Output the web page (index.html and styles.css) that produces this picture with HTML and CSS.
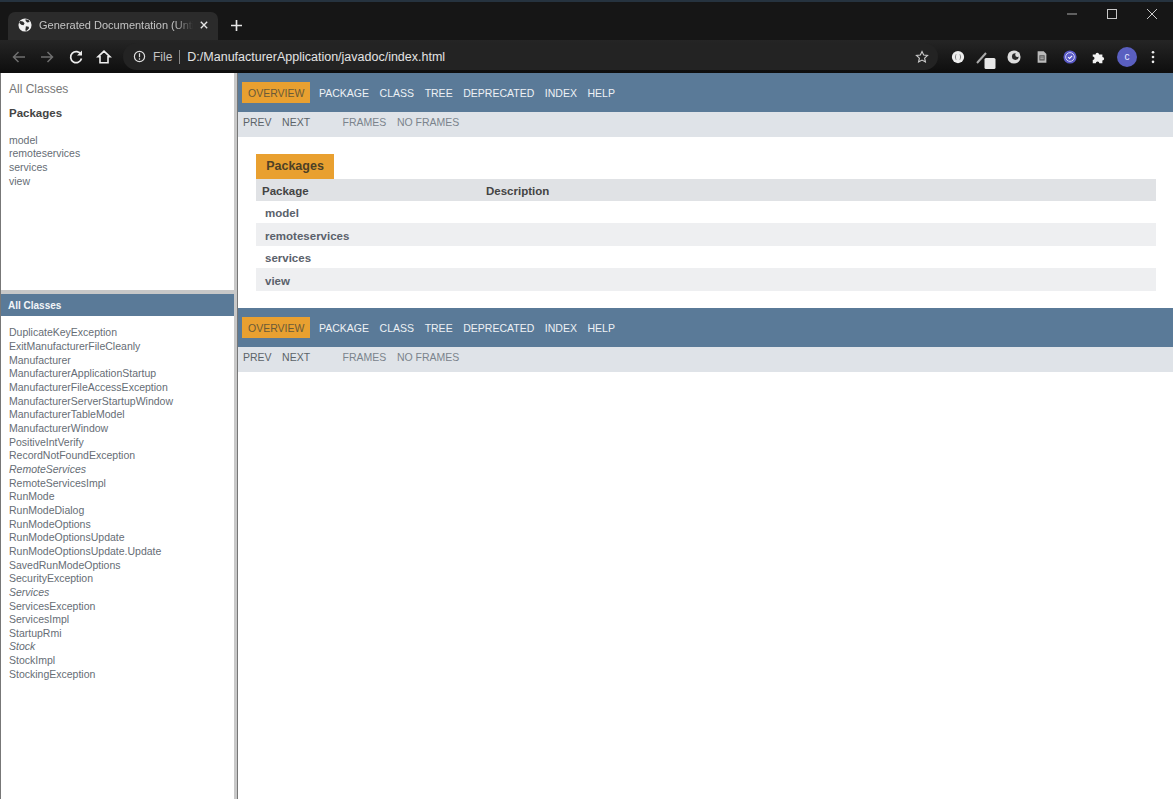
FILE: index.html
```html
<!DOCTYPE html>
<html lang="en">
<head>
<meta charset="utf-8">
<title>Generated Documentation</title>
<link rel="stylesheet" href="styles.css">
</head>
<body>
<div class="browser">
  <header class="chrome">
    <div class="tabstrip">
      <div class="tab">
        <svg class="globe" viewBox="0 0 16 16"><circle cx="8" cy="8" r="7.500" fill="#f0f0f0"/><path d="M2.500 3.500l3.200.4 1.800 2.100-1.200 2.300-2.600-.6-2.400-2.400zM9 9.500l3.200.5.400 1.700-2.600 3-1.600-.5zM8.500 1.500l3.600.8 1.200 2.200-2.800.6-1.700-1.600z" fill="#2b2b2b"/></svg>
        <span class="tab-title">Generated Documentation (Untit</span>
        <svg class="tab-x" viewBox="0 0 10 10"><path d="M1 1l8 8M9 1l-8 8" stroke="#e6e6e6" stroke-width="1.700"/></svg>
      </div>
      <svg class="newtab" viewBox="0 0 12 12"><path d="M6 0v12M0 6h12" stroke="#e6e6e6" stroke-width="1.800"/></svg>
      <div class="window-controls">
        <svg viewBox="0 0 12 12"><path d="M1 6h10" stroke="#aaa" stroke-width="1"/></svg>
        <svg viewBox="0 0 12 12"><rect x="1.500" y="1.500" width="9" height="9" fill="none" stroke="#c8c8c8" stroke-width="1"/></svg>
        <svg viewBox="0 0 12 12"><path d="M1 1l10 10M11 1L1 11" stroke="#c8c8c8" stroke-width="1"/></svg>
      </div>
    </div>
    <div class="toolbar">
      <svg class="tool" viewBox="0 0 16 16"><path d="M14 8H2.500M7.500 3l-5 5 5 5" fill="none" stroke="#6f6f6f" stroke-width="1.500"/></svg>
      <svg class="tool" viewBox="0 0 16 16"><path d="M2 8h11.500M8.500 3l5 5-5 5" fill="none" stroke="#6f6f6f" stroke-width="1.500"/></svg>
      <svg class="tool" viewBox="0 0 16 16"><path d="M13 5.500A5.500 5.500 0 1 0 13.500 9.500" fill="none" stroke="#eee" stroke-width="1.700"/><path d="M14 1.500v5h-5z" fill="#eee"/></svg>
      <svg class="tool" viewBox="0 0 16 16"><path d="M8 2.200L2 7.800h2v6h8v-6h2z" fill="none" stroke="#eee" stroke-width="1.600"/></svg>
      <div class="omnibox">
        <svg class="info" viewBox="0 0 14 14"><circle cx="7" cy="7" r="5.500" fill="none" stroke="#ddd" stroke-width="1.300"/><path d="M7 3.500v4.200M7 9v1.500" stroke="#ddd" stroke-width="1.300"/></svg>
        <span class="scheme">File</span>
        <span class="sep"></span>
        <span class="url">D:/ManufacturerApplication/javadoc/index.html</span>
        <svg class="star" viewBox="0 0 16 16"><path d="M8 1.800l1.900 4 4.400.5-3.300 3 .9 4.400L8 11.500l-3.900 2.200.9-4.400-3.300-3 4.400-.5z" fill="none" stroke="#ccc" stroke-width="1.300"/></svg>
      </div>
      <div class="extensions">
        <svg class="ext" viewBox="0 0 16 16"><circle cx="8" cy="8" r="7" fill="#eee"/><path d="M5.800 5C4.800 7 4.800 9 5.800 11M10.200 5c1 2 1 4 0 6" fill="none" stroke="#777" stroke-width="1"/></svg>
        <svg class="ext wide" viewBox="0 0 22 22"><path d="M2 15L11 5" stroke="#aaa" stroke-width="2"/><rect x="9.500" y="10" width="11" height="11" rx="1.500" fill="#e8e8e8"/></svg>
        <svg class="ext" viewBox="0 0 16 16"><circle cx="8" cy="8" r="7.500" fill="#ddd"/><circle cx="9.500" cy="7.500" r="3.800" fill="#2a2a2a"/><circle cx="12" cy="5.500" r="2.600" fill="#ddd"/></svg>
        <svg class="ext" viewBox="0 0 16 16"><path d="M3 1.500h7l3 3v10H3z" fill="#bbb"/><rect x="5" y="6" width="6" height="6" fill="#555"/><path d="M6 8h4M6 10h4" stroke="#ccc"/></svg>
        <svg class="ext" viewBox="0 0 16 16"><circle cx="8" cy="8" r="7.500" fill="#5a5ac8"/><circle cx="8" cy="8" r="5" fill="none" stroke="#dfe0f5"/><path d="M5.800 8l1.600 1.600 3-3" fill="none" stroke="#fff" stroke-width="1.200"/></svg>
        <svg class="ext puzzle" viewBox="0 0 16 16"><path d="M2 5h3.200a2 2 0 1 1 4 0H13v3a2 2 0 1 1 0 4v3H9.500a2 2 0 1 0-4 0H2v-3.500a2 2 0 1 0 0-4z" fill="#f2f2f2"/></svg>
        <span class="avatar">c</span>
        <svg class="menu" viewBox="0 0 4 16"><circle cx="2" cy="2.500" r="1.500" fill="#eee"/><circle cx="2" cy="8" r="1.500" fill="#eee"/><circle cx="2" cy="13.500" r="1.500" fill="#eee"/></svg>
      </div>
    </div>
  </header>

  <div class="frames">
    <aside class="sidebar">
      <section class="pkg-frame">
        <h1 class="all-classes">All Classes</h1>
        <h2 class="packages-title">Packages</h2>
        <ul class="side-list pkg-list">
          <li>model</li>
          <li>remoteservices</li>
          <li>services</li>
          <li>view</li>
        </ul>
      </section>
      <section class="class-frame">
        <div class="class-bar">All Classes</div>
        <ul class="side-list class-list">
          <li>DuplicateKeyException</li>
          <li>ExitManufacturerFileCleanly</li>
          <li>Manufacturer</li>
          <li>ManufacturerApplicationStartup</li>
          <li>ManufacturerFileAccessException</li>
          <li>ManufacturerServerStartupWindow</li>
          <li>ManufacturerTableModel</li>
          <li>ManufacturerWindow</li>
          <li>PositiveIntVerify</li>
          <li>RecordNotFoundException</li>
          <li class="iface">RemoteServices</li>
          <li>RemoteServicesImpl</li>
          <li>RunMode</li>
          <li>RunModeDialog</li>
          <li>RunModeOptions</li>
          <li>RunModeOptionsUpdate</li>
          <li>RunModeOptionsUpdate.Update</li>
          <li>SavedRunModeOptions</li>
          <li>SecurityException</li>
          <li class="iface">Services</li>
          <li>ServicesException</li>
          <li>ServicesImpl</li>
          <li>StartupRmi</li>
          <li class="iface">Stock</li>
          <li>StockImpl</li>
          <li>StockingException</li>
        </ul>
      </section>
    </aside>

    <main class="content">
      <nav class="topnav">
        <span class="nav-item active">OVERVIEW</span>
        <span class="nav-item">PACKAGE</span>
        <span class="nav-item">CLASS</span>
        <span class="nav-item">TREE</span>
        <span class="nav-item">DEPRECATED</span>
        <span class="nav-item">INDEX</span>
        <span class="nav-item">HELP</span>
      </nav>
      <div class="subnav">
        <span class="sub-dark">PREV</span>
        <span class="sub-dark">NEXT</span>
        <span class="sub-gap">FRAMES</span>
        <span>NO FRAMES</span>
      </div>
      <div class="summary">
        <div class="caption">Packages</div>
        <div class="pkg-table">
          <div class="pkg-head"><span class="col-name">Package</span><span>Description</span></div>
          <div class="pkg-row">model</div>
          <div class="pkg-row alt">remoteservices</div>
          <div class="pkg-row">services</div>
          <div class="pkg-row alt">view</div>
        </div>
      </div>
      <nav class="topnav">
        <span class="nav-item active">OVERVIEW</span>
        <span class="nav-item">PACKAGE</span>
        <span class="nav-item">CLASS</span>
        <span class="nav-item">TREE</span>
        <span class="nav-item">DEPRECATED</span>
        <span class="nav-item">INDEX</span>
        <span class="nav-item">HELP</span>
      </nav>
      <div class="subnav">
        <span class="sub-dark">PREV</span>
        <span class="sub-dark">NEXT</span>
        <span class="sub-gap">FRAMES</span>
        <span>NO FRAMES</span>
      </div>
    </main>
  </div>
</div>
</body>
</html>
```
FILE: styles.css
```css
* { box-sizing: border-box; }
html, body { margin: 0; height: 100%; overflow: hidden; }
body { font-family: "Liberation Sans", Arial, sans-serif; background: #fff; }
ul { list-style: none; margin: 0; padding: 0; }
h1, h2 { margin: 0; }

.browser { width: 1173px; height: 799px; display: flex; flex-direction: column; }

.chrome { height: 73px; flex: none; background: #171717; }
.tabstrip { height: 40px; display: flex; align-items: flex-end; padding-left: 8px; border-top: 2px solid #26333f; background: #161616; }
.tab { width: 210px; height: 28px; background: #2b2b2b; border-radius: 7px 7px 0 0; display: flex; align-items: center; padding: 0 10px 2px 10px; }
.globe { width: 14px; height: 14px; flex: none; }
.tab-title { margin-left: 7px; width: 161px; overflow: hidden; white-space: nowrap; font-size: 11px; color: #c4c4c4; -webkit-mask-image: linear-gradient(90deg, #000 84%, transparent 96%); mask-image: linear-gradient(90deg, #000 84%, transparent 96%); }
.tab-x { width: 8px; height: 8px; flex: none; }
.newtab { width: 11px; height: 11px; margin: 0 0 9px 13px; }
.window-controls { margin-left: auto; align-self: flex-start; display: flex; gap: 28px; padding: 6px 15px 0 0; }
.window-controls svg { width: 12px; height: 12px; }

.toolbar { height: 33px; display: flex; align-items: center; padding-left: 11px; background: linear-gradient(#252525, #0e0e0e); }
.tool { width: 16px; height: 16px; margin-right: 12px; flex: none; }
.tool:nth-child(2) { margin-right: 13px; }
.omnibox { width: 815px; height: 27px; margin-left: -1px; background: #232323; border-radius: 14px; display: flex; align-items: center; padding: 0 9px 0 10px; }
.info { width: 13px; height: 13px; flex: none; }
.scheme { margin-left: 7px; font-size: 12px; color: #c4c4c4; }
.sep { width: 1px; height: 14px; background: #888; margin: 0 7px; }
.url { font-size: 12.500px; color: #e4e4e4; white-space: nowrap; }
.star { width: 14px; height: 14px; margin-left: auto; }
.extensions { flex: 1; display: flex; align-items: center; padding-left: 13px; }
.ext { width: 14px; height: 14px; flex: none; margin-right: 14px; }
.ext.wide { width: 22px; height: 22px; margin: 5px 10px 0 -4px; }
.ext.puzzle { margin-right: 12px; }
.avatar { width: 20px; height: 20px; border-radius: 50%; background: #5a5fc0; color: #e8e8ff; font-size: 10px; display: flex; align-items: center; justify-content: center; flex: none; }
.menu { width: 4px; height: 14px; margin-left: 14px; flex: none; }

.frames { flex: 1; display: flex; min-height: 0; }
.sidebar { width: 237px; flex: none; display: flex; flex-direction: column; border-left: 1px solid #777; border-right: 3px solid #c8c8c8; box-shadow: 1px 0 0 #777; position: relative; }
.pkg-frame { height: 220.500px; flex: none; border-bottom: 4px solid #c8c8c8; padding: 9px 8px 0; }
.all-classes { font-size: 12px; font-weight: 400; color: #777; line-height: 14px; }
.packages-title { margin-top: 10px; font-size: 11.500px; font-weight: 700; color: #444; line-height: 14px; }
.side-list { font-size: 10.500px; color: #666d75; line-height: 13.650px; }
.pkg-list { margin-top: 13.700px; }
.class-frame { flex: 1; min-height: 0; }
.class-bar { height: 22.500px; background: #5a7a98; padding: 2px 7px 0; display: flex; align-items: center; font-size: 10px; font-weight: 700; color: #f2f5f8; }
.class-list { padding: 10.400px 8px 0; }
.iface { font-style: italic; }

.content { flex: 1; min-width: 0; margin-left: 1px; background: #fff; }
.topnav { height: 39px; background: #5a7a98; display: flex; align-items: center; padding: 0 0 0 4px; gap: 10.600px; font-size: 10.500px; color: #edf1f5; }
.nav-item.active { background: #e9a030; color: #6a5a38; padding: 0 6px; height: 21px; display: flex; align-items: center; margin-right: -2px; }
.subnav { height: 24.500px; background: #dfe3e8; display: flex; align-items: flex-start; padding: 4px 0 0 5px; gap: 10.500px; font-size: 10.500px; line-height: 12px; color: #7b838c; }
.sub-dark { color: #5c6369; }
.sub-gap { margin-left: 22px; }

.summary { height: 171.500px; padding: 17.500px 17px 0 18px; }
.caption { width: 78px; height: 24.500px; background: #e9a030; color: #4d4026; font-size: 12.500px; font-weight: 700; display: flex; align-items: center; justify-content: center; }
.pkg-table { font-size: 11.500px; font-weight: 700; color: #5a616b; }
.pkg-head { height: 22px; background: #e0e2e5; display: flex; align-items: center; padding: 2px 0 0 6px; color: #444; }
.col-name { width: 224px; }
.pkg-row { height: 22.500px; display: flex; align-items: center; padding: 3px 0 0 9px; }
.pkg-row.alt { background: #eeeff1; }
```
